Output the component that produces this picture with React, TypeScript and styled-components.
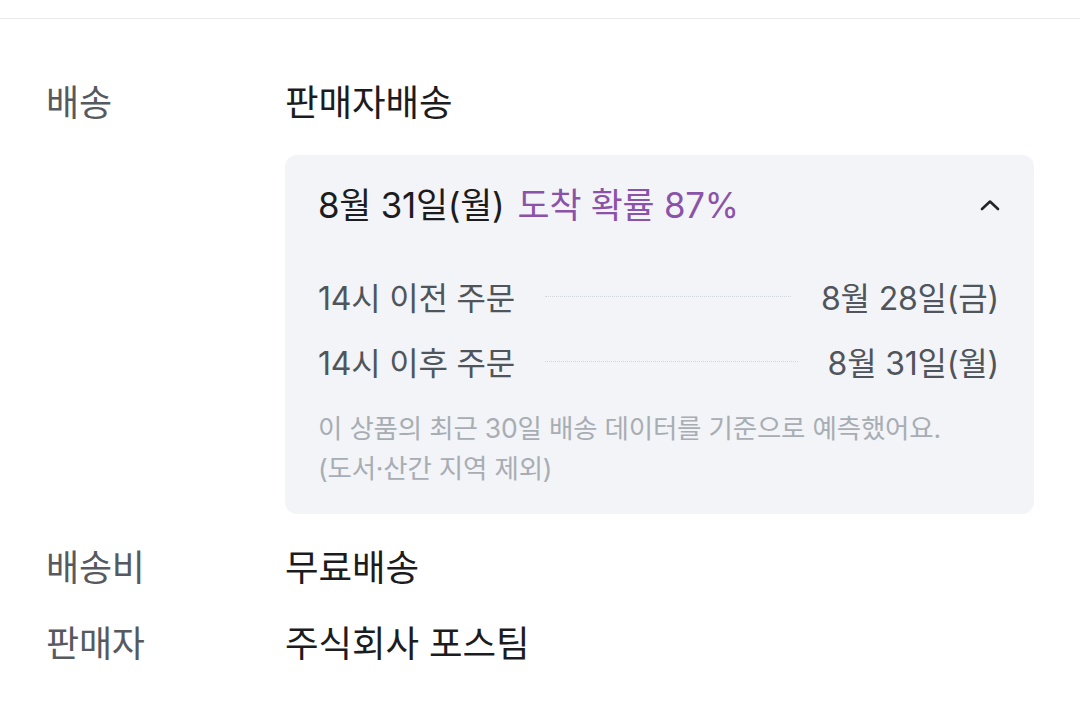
import React from 'react';
import styled, { createGlobalStyle } from 'styled-components';

const GlobalStyle = createGlobalStyle`
  html, body {
    margin: 0;
    padding: 0;
    background: #ffffff;
  }
  body {
    font-family: Inter, "Noto Sans CJK KR", sans-serif;
    -webkit-font-smoothing: antialiased;
  }
`;

const Page = styled.div`
  width: 1080px;
  min-height: 725px;
  background: #ffffff;
`;

const TopBar = styled.div`
  height: 18px;
  border-bottom: 1px solid #ebebeb;
`;

const InfoList = styled.dl`
  margin: 0;
  padding: 62px 46px 0 46px;
  display: flex;
  flex-direction: column;
  gap: 32px;
`;

const InfoRow = styled.div`
  display: grid;
  grid-template-columns: 239px 1fr;
  align-items: start;
`;

const Label = styled.dt`
  margin: 0;
  font-size: 36px;
  line-height: 44px;
  color: #565a60;
  letter-spacing: -0.2px;
`;

const Value = styled.dd`
  margin: 0;
  display: flex;
  flex-direction: column;
`;

const ValueText = styled.span`
  font-size: 36.5px;
  line-height: 44px;
  color: #1c1c1e;
  letter-spacing: -0.1px;
`;

const ArrivalCard = styled.section`
  margin: 30px 0 0;
  background: #f2f4f7;
  border-radius: 12px;
  padding: 28px 35px 26px 33px;
`;

const CardHeader = styled.div`
  display: flex;
  align-items: center;
  justify-content: space-between;
  height: 44px;
`;

const HeaderTitle = styled.div`
  font-size: 34.8px;
  line-height: 44px;
  color: #1c1c1e;
  letter-spacing: -0.2px;
`;

const Probability = styled.span`
  color: #8b52a9;
  margin-left: 13px;
`;

const Chevron = styled.svg`
  width: 20px;
  height: 12px;
  margin-right: -1px;
`;

const Schedule = styled.ul`
  list-style: none;
  margin: 47px 0 0;
  padding: 0;
  display: flex;
  flex-direction: column;
  gap: 21px;
`;

const ScheduleRow = styled.li`
  display: flex;
  align-items: center;
  height: 44px;
  font-size: 32px;
  color: #50555b;
  letter-spacing: -0.2px;
`;

const Leader = styled.span`
  flex: 1;
  margin: 0 30px;
  border-top: 1.5px dotted #d3d6db;
  height: 0;
`;

const Note = styled.p`
  margin: 25px 0 0;
  font-size: 26.5px;
  line-height: 40px;
  color: #a8adb4;
  letter-spacing: -0.2px;
`;

const schedule = [
  { when: '14시 이전 주문', date: '8월 28일(금)' },
  { when: '14시 이후 주문', date: '8월 31일(월)' },
];

export default function App() {
  return (
    <Page>
      <GlobalStyle />
      <TopBar />
      <InfoList>
        <InfoRow>
          <Label>배송</Label>
          <Value>
            <ValueText>판매자배송</ValueText>
            <ArrivalCard>
              <CardHeader>
                <HeaderTitle>
                  8월 31일(월)
                  <Probability>도착 확률 87%</Probability>
                </HeaderTitle>
                <Chevron viewBox="0 0 20 12" fill="none">
                  <polyline
                    points="2,10 10,2.5 18,10"
                    stroke="#222428"
                    strokeWidth="2.6"
                    strokeLinecap="round"
                    strokeLinejoin="round"
                  />
                </Chevron>
              </CardHeader>
              <Schedule>
                {schedule.map((s) => (
                  <ScheduleRow key={s.when}>
                    <span>{s.when}</span>
                    <Leader />
                    <span>{s.date}</span>
                  </ScheduleRow>
                ))}
              </Schedule>
              <Note>
                이 상품의 최근 30일 배송 데이터를 기준으로 예측했어요.
                <br />
                (도서·산간 지역 제외)
              </Note>
            </ArrivalCard>
          </Value>
        </InfoRow>
        <InfoRow>
          <Label>배송비</Label>
          <Value>
            <ValueText>무료배송</ValueText>
          </Value>
        </InfoRow>
        <InfoRow>
          <Label>판매자</Label>
          <Value>
            <ValueText>주식회사 포스팀</ValueText>
          </Value>
        </InfoRow>
      </InfoList>
    </Page>
  );
}
